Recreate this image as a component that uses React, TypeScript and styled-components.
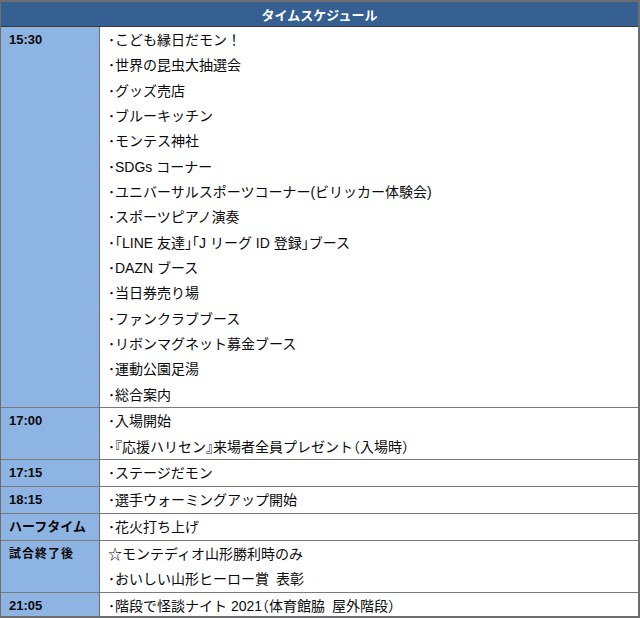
import React from 'react';
import styled, { createGlobalStyle } from 'styled-components';

const GlobalStyle = createGlobalStyle`
  html, body {
    margin: 0;
    padding: 0;
    background: #ffffff;
  }
  body {
    font-family: 'Liberation Sans', 'Noto Sans CJK JP', sans-serif;
  }
`;

const Table = styled.div`
  width: 640px;
  height: 618px;
  box-sizing: border-box;
  border: 2px solid #6e6e6e;
  border-left-width: 1px;
  display: flex;
  flex-direction: column;
  overflow: hidden;
`;

const Header = styled.div`
  height: 24px;
  flex: none;
  display: flex;
  align-items: center;
  justify-content: center;
  background-color: #366092;
  border-bottom: 1px solid #3a3a3a;
  color: #ffffff;
  font-family: 'Noto Sans CJK JP', sans-serif;
  font-weight: 700;
  font-size: 13px;
`;

const Body = styled.div`
  display: flex;
  flex-direction: column;
`;

const Row = styled.div`
  display: grid;
  grid-template-columns: 99px 1fr;
  border-top: 1px solid #7a7a7a;

  &:first-of-type {
    border-top: none;
  }
`;

const TimeCell = styled.div<{ $spaced?: boolean }>`
  background-color: #8db4e2;
  border-right: 1px solid #6e6e6e;
  padding-left: 8px;
  color: #0a0a0a;
  font-weight: 700;
  font-size: ${props => (props.$spaced ? '12px' : '13px')};
  letter-spacing: ${props => (props.$spaced ? '1px' : '0')};
  line-height: 26px;
  white-space: nowrap;
`;

const Items = styled.div`
  padding-left: 8px;
  display: flex;
  flex-direction: column;
`;

const Item = styled.div`
  height: 25.35px;
  font-size: 14px;
  line-height: 26px;
  color: #0a0a0a;
  white-space: nowrap;
  overflow: visible;
`;

// brackets set narrow, like the proportional font of the original sheet
const Punct = styled.span`
  font-family: 'Noto Sans CJK JP', sans-serif;
  font-feature-settings: 'halt';
  line-height: 1;
`;

const PUNCT = /([「」『』（）])/;

const renderText = (text: string) =>
  text.split(PUNCT).map((part, i) =>
    PUNCT.test(part) ? <Punct key={i}>{part}</Punct> : part
  );

type Block = { time: string; spaced?: boolean; items: string[] };

const schedule: Block[] = [
  {
    time: '15:30',
    items: [
      '･こども縁日だモン！',
      '･世界の昆虫大抽選会',
      '･グッズ売店',
      '･ブルーキッチン',
      '･モンテス神社',
      '･SDGs コーナー',
      '･ユニバーサルスポーツコーナー(ビリッカー体験会)',
      '･スポーツピアノ演奏',
      '･「LINE 友達」「J リーグ ID 登録」ブース',
      '･DAZN ブース',
      '･当日券売り場',
      '･ファンクラブブース',
      '･リボンマグネット募金ブース',
      '･運動公園足湯',
      '･総合案内',
    ],
  },
  {
    time: '17:00',
    items: ['･入場開始', '･『応援ハリセン』来場者全員プレゼント（入場時）'],
  },
  { time: '17:15', items: ['･ステージだモン'] },
  { time: '18:15', items: ['･選手ウォーミングアップ開始'] },
  { time: 'ハーフタイム', items: ['･花火打ち上げ'] },
  {
    time: '試合終了後',
    spaced: true,
    items: ['☆モンテディオ山形勝利時のみ', '･おいしい山形ヒーロー賞\u2002表彰'],
  },
  { time: '21:05', items: ['･階段で怪談ナイト 2021（体育館脇\u2002屋外階段）'] },
];

export default function App(): React.ReactElement {
  return (
    <>
      <GlobalStyle />
      <Table>
        <Header>タイムスケジュール</Header>
        <Body>
          {schedule.map(block => (
            <Row key={block.time}>
              <TimeCell $spaced={block.spaced}>{block.time}</TimeCell>
              <Items>
                {block.items.map(item => (
                  <Item key={item}>{renderText(item)}</Item>
                ))}
              </Items>
            </Row>
          ))}
        </Body>
      </Table>
    </>
  );
}
